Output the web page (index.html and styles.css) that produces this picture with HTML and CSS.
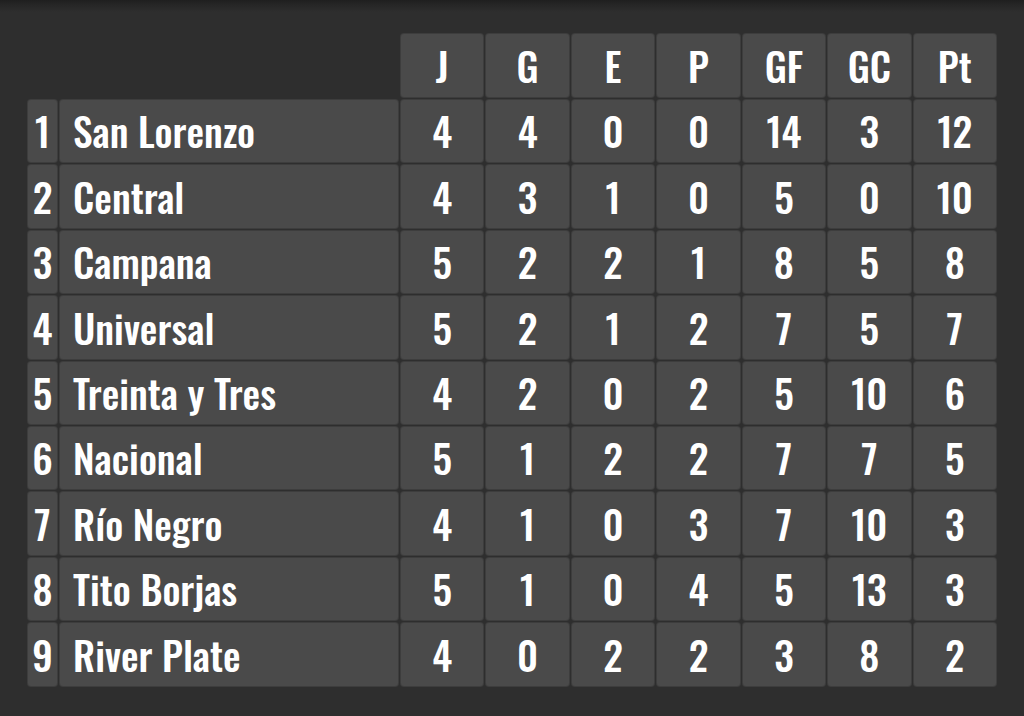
FILE: index.html
```html
<!DOCTYPE html>
<html lang="es">
<head>
<meta charset="utf-8">
<title>Tabla de posiciones</title>
<link rel="stylesheet" href="styles.css">
</head>
<body>
<div class="page">
  <div class="standings">
    <div class="blank"></div>
    <div class="cell head">J</div>
    <div class="cell head">G</div>
    <div class="cell head">E</div>
    <div class="cell head">P</div>
    <div class="cell head">GF</div>
    <div class="cell head">GC</div>
    <div class="cell head">Pt</div>

    <div class="cell rank">1</div><div class="cell team">San Lorenzo</div>
    <div class="cell">4</div><div class="cell">4</div><div class="cell">0</div><div class="cell">0</div><div class="cell">14</div><div class="cell">3</div><div class="cell">12</div>

    <div class="cell rank">2</div><div class="cell team">Central</div>
    <div class="cell">4</div><div class="cell">3</div><div class="cell">1</div><div class="cell">0</div><div class="cell">5</div><div class="cell">0</div><div class="cell">10</div>

    <div class="cell rank">3</div><div class="cell team">Campana</div>
    <div class="cell">5</div><div class="cell">2</div><div class="cell">2</div><div class="cell">1</div><div class="cell">8</div><div class="cell">5</div><div class="cell">8</div>

    <div class="cell rank">4</div><div class="cell team">Universal</div>
    <div class="cell">5</div><div class="cell">2</div><div class="cell">1</div><div class="cell">2</div><div class="cell">7</div><div class="cell">5</div><div class="cell">7</div>

    <div class="cell rank">5</div><div class="cell team">Treinta y Tres</div>
    <div class="cell">4</div><div class="cell">2</div><div class="cell">0</div><div class="cell">2</div><div class="cell">5</div><div class="cell">10</div><div class="cell">6</div>

    <div class="cell rank">6</div><div class="cell team">Nacional</div>
    <div class="cell">5</div><div class="cell">1</div><div class="cell">2</div><div class="cell">2</div><div class="cell">7</div><div class="cell">7</div><div class="cell">5</div>

    <div class="cell rank">7</div><div class="cell team">Río Negro</div>
    <div class="cell">4</div><div class="cell">1</div><div class="cell">0</div><div class="cell">3</div><div class="cell">7</div><div class="cell">10</div><div class="cell">3</div>

    <div class="cell rank">8</div><div class="cell team">Tito Borjas</div>
    <div class="cell">5</div><div class="cell">1</div><div class="cell">0</div><div class="cell">4</div><div class="cell">5</div><div class="cell">13</div><div class="cell">3</div>

    <div class="cell rank">9</div><div class="cell team">River Plate</div>
    <div class="cell">4</div><div class="cell">0</div><div class="cell">2</div><div class="cell">2</div><div class="cell">3</div><div class="cell">8</div><div class="cell">2</div>
  </div>
</div>
</body>
</html>
```
FILE: styles.css
```css
html, body {
  margin: 0;
  padding: 0;
}
body {
  width: 1024px;
  height: 716px;
  overflow: hidden;
  background: #2e2e2e;
  font-family: "Oswald", "Roboto Condensed", "Liberation Sans", sans-serif;
  color: #ffffff;
}
.page {
  height: 716px;
  box-sizing: border-box;
  padding: 34px 0 0 28px;
  background: linear-gradient(to bottom, #1f1f1f 0px, #262626 5px, #2e2e2e 12px, #2e2e2e 100%);
}
.standings {
  display: grid;
  width: 968px;
  grid-template-columns: 29px 338px repeat(7, 1fr);
  grid-template-rows: 63px;
  grid-auto-rows: 62.4px;
  gap: 3px;
}
.blank {
  grid-column: span 2;
}
.cell {
  display: flex;
  align-items: center;
  justify-content: center;
  background: #4a4a4a;
  border-radius: 3px;
  box-shadow: 0 0 0 1px #3d3d3d;
  font-size: 39.5px;
  font-weight: 500;
  line-height: 1;
  white-space: nowrap;
}
.team {
  justify-content: flex-start;
  padding-left: 13px;
}
```
